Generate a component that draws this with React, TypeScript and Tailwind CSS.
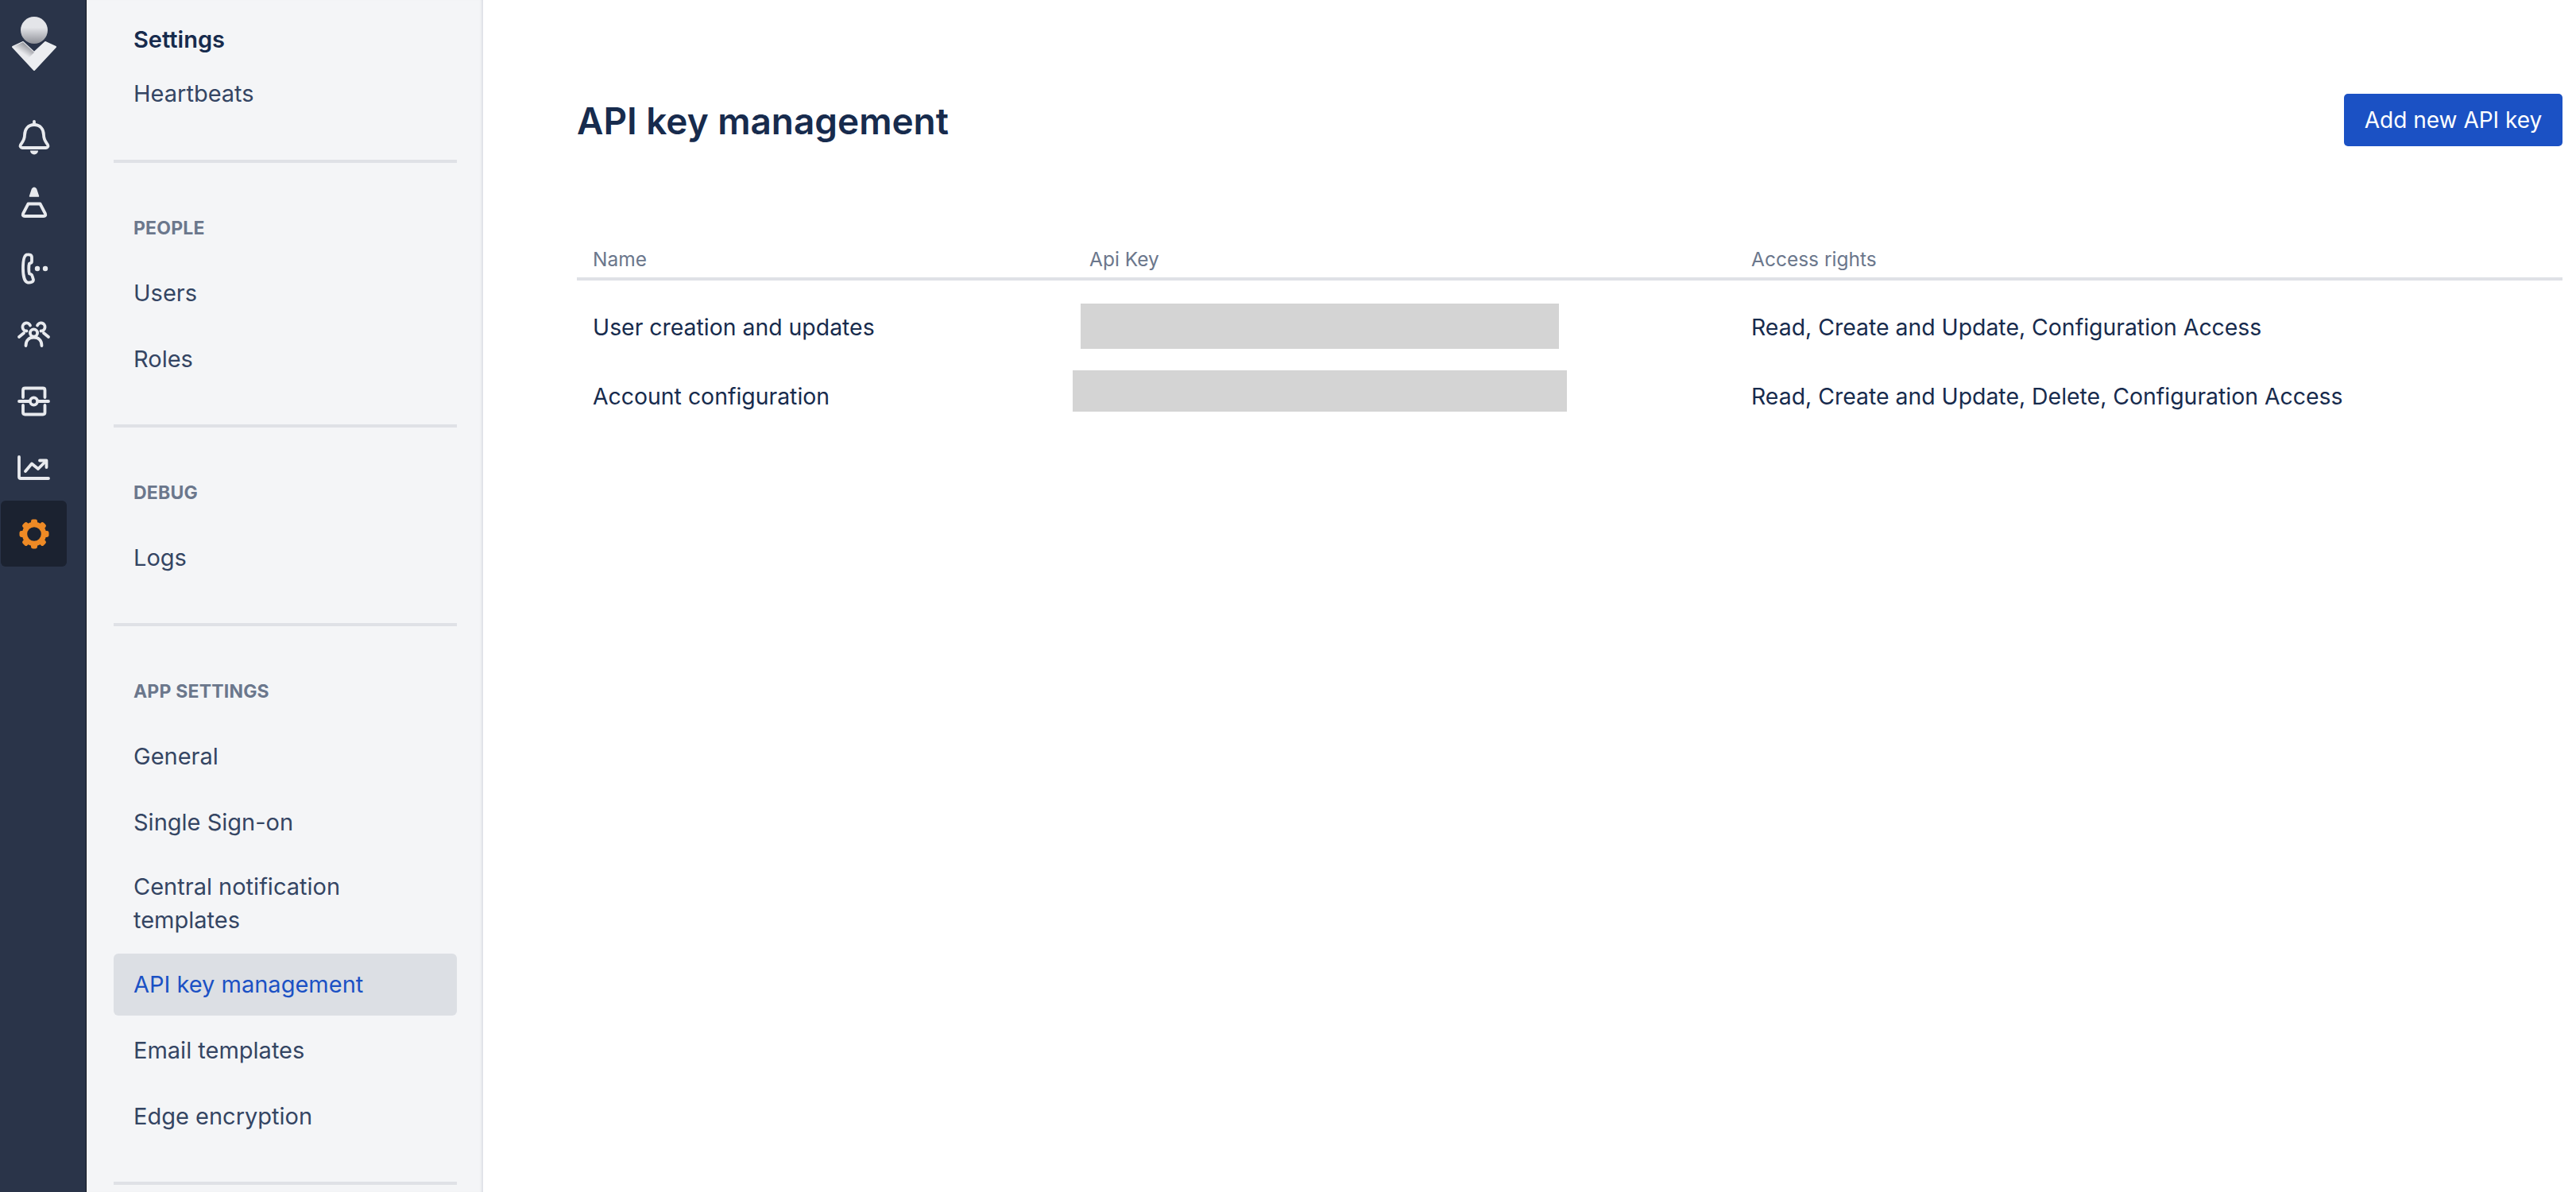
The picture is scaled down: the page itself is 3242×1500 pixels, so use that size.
const navFont = "font-['Inter',sans-serif]";

function Logo() {
  return (
    <svg width="86" height="96" viewBox="0 0 86 96" fill="none">
      <defs>
        <linearGradient id="ball" x1="0" y1="0" x2="0" y2="1">
          <stop offset="0.4" stopColor="#e4e5e9" />
          <stop offset="1" stopColor="#8f9198" />
        </linearGradient>
        <linearGradient id="arm" x1="0.75" y1="0.1" x2="0.3" y2="0.7">
          <stop offset="0" stopColor="#85878e" />
          <stop offset="0.75" stopColor="#e9eaed" />
        </linearGradient>
      </defs>
      <circle cx="43" cy="37" r="17" fill="url(#ball)" />
      <path d="M29 52 L43 65 L57 52 L70 58 L43 87 L16 58 Z" fill="#eceef1" stroke="#eceef1" strokeWidth="2" strokeLinejoin="round" />
      <path d="M29 52 L43 65 L32 76 L16 58 Z" fill="url(#arm)" />
    </svg>
  );
}

const iconProps = {
  width: 48,
  height: 48,
  viewBox: "0 0 48 48",
  fill: "none",
  stroke: "#e8eaee",
  strokeWidth: 3.8,
  strokeLinecap: "round" as const,
  strokeLinejoin: "round" as const,
};

function BellIcon() {
  return (
    <svg {...iconProps}>
      <path d="M24 10 C16 10 12 16 12 23 C12 29 9 32 7 35 C6 37 7 39 9 39 H39 C41 39 42 37 41 35 C39 32 36 29 36 23 C36 16 32 10 24 10Z" />
      <path d="M24 6 V9" />
      <path d="M19 42.5 H29 A5 5 0 0 1 19 42.5Z" fill="#e8eaee" stroke="none" />
    </svg>
  );
}

function ConeIcon() {
  return (
    <svg {...iconProps}>
      <g transform="translate(0 1)">
        <path d="M21.5 7 Q24 3.5 26.5 7 L29.5 16 H18.5 Z" fill="#e8eaee" strokeWidth="1.5" />
        <path d="M16.5 25.5 H31.5 L38 38 Q39 41 36 41 H12 Q9 41 10 38 Z" />
      </g>
    </svg>
  );
}

function PhoneIcon() {
  return (
    <svg {...iconProps}>
      <path d="M15 6.5 C18 6 21 6.5 21 10 L21 15 Q21 17 18 17.5 C17 20 17 28 18 30.5 Q21 31 21.5 33 L23 38 C23 41 19 42 16 41.5 C12 41 10 33 10 24 C10 15 11 7 15 6.5Z" />
      <circle cx="28" cy="24" r="3.2" fill="#e8eaee" stroke="none" />
      <circle cx="38" cy="24" r="3.2" fill="#e8eaee" stroke="none" />
    </svg>
  );
}

function TeamIcon() {
  return (
    <svg {...iconProps}>
      <circle cx="23.5" cy="22" r="4.6" />
      <path d="M13.5 38 C13.5 31 18 27.5 23.5 27.5 S33.5 31 33.5 38" />
      <path d="M14.5 19.5 A5 5 0 1 1 19 12.5" />
      <path d="M32.5 19.5 A5 5 0 1 0 28 12.5" />
      <path d="M5 27 L11 22" />
      <path d="M42 27 L36 22" />
    </svg>
  );
}

function IntegrationIcon() {
  return (
    <svg {...iconProps}>
      <path d="M10 19 V10 Q10 7.5 12.5 7.5 H35 Q37.5 7.5 37.5 10 V19" />
      <path d="M10 29 V38 Q10 40.5 12.5 40.5 H35 Q37.5 40.5 37.5 38 V29" />
      <path d="M5 24 H18" />
      <path d="M29 24 H42" />
      <circle cx="23.5" cy="24" r="4.6" />
    </svg>
  );
}

function ChartIcon() {
  return (
    <svg {...iconProps}>
      <path d="M5 11 V36 Q5 38 7 38 H42" />
      <path d="M13 29 L21 19.5 L29 26 L39 16" />
      <path d="M31 15.5 H39.5 V24" />
    </svg>
  );
}

function GearIcon() {
  const teeth = [0, 45, 90, 135, 180, 225, 270, 315];
  return (
    <svg width="48" height="48" viewBox="0 0 48 48" fill="none">
      <circle cx="24" cy="24" r="12" stroke="#ee8a25" strokeWidth="6.4" />
      {teeth.map((angle) => (
        <rect key={angle} x="20" y="5.5" width="8" height="8" rx="2.4" fill="#ee8a25" transform={`rotate(${angle} 24 24)`} />
      ))}
    </svg>
  );
}

function Rail() {
  const icons = [BellIcon, ConeIcon, PhoneIcon, TeamIcon, IntegrationIcon, ChartIcon];
  return (
    <div className="flex h-full w-[109px] shrink-0 flex-col border-r border-[#11151f] bg-[#2a3449]">
      <div className="h-[129px] pt-[1px]">
        <Logo />
      </div>
      <div className="flex flex-col items-start pl-[1px]">
        {icons.map((Icon, i) => (
          <div key={i} className="flex h-[83.5px] w-[83px] items-center justify-center">
            <Icon />
          </div>
        ))}
        <div className="flex h-[83px] w-[83px] items-center justify-center rounded-md bg-[#1b2230]">
          <GearIcon />
        </div>
      </div>
    </div>
  );
}

function NavItem({ label, active, tall }: { label: string; active?: boolean; tall?: boolean }) {
  return (
    <div
      className={`mb-[5px] flex items-center rounded-md px-[25px] text-[29px] font-[430] leading-[42px] ${tall ? "h-[116px]" : "h-[78px]"} ${
        active ? "bg-[#dcdfe4] text-[#1b51c4]" : "text-[#344563]"
      }`}
    >
      {label}
    </div>
  );
}

function NavGroup({ title, children }: { title: string; children: React.ReactNode }) {
  return (
    <div className="border-t-4 border-[#dfe1e6] pb-[38px]">
      <div className="mb-[23px] mt-[62px] px-[25px] text-[23px] font-bold leading-[40px] tracking-[0.2px] text-[#6b778c]">{title}</div>
      {children}
    </div>
  );
}

function Sidebar() {
  return (
    <aside className="flex h-full w-[499px] shrink-0 flex-col overflow-hidden bg-[#f4f5f7] pl-[34px] pr-[33px] shadow-[inset_-4px_0_3px_-2px_rgba(9,30,66,0.1)]">
      <div className="flex h-[79px] shrink-0 items-end pb-[9px] pl-[25px] text-[29px] font-semibold leading-[40px] text-[#172b4d]">Settings</div>
      <div className="pb-[39px]">
        <NavItem label="Heartbeats" />
      </div>
      <NavGroup title="PEOPLE">
        <NavItem label="Users" />
        <NavItem label="Roles" />
      </NavGroup>
      <NavGroup title="DEBUG">
        <NavItem label="Logs" />
      </NavGroup>
      <NavGroup title="APP SETTINGS">
        <NavItem label="General" />
        <NavItem label="Single Sign-on" />
        <NavItem label="Central notification templates" tall />
        <NavItem label="API key management" active />
        <NavItem label="Email templates" />
        <NavItem label="Edge encryption" />
      </NavGroup>
      <div className="border-t-4 border-[#dfe1e6]" />
    </aside>
  );
}

const rows = [
  { name: "User creation and updates", rights: "Read, Create and Update, Configuration Access", mask: "-ml-[11px] mt-[29px] h-[57px] w-[602px]" },
  { name: "Account configuration", rights: "Read, Create and Update, Delete, Configuration Access", mask: "-ml-[21px] mt-[26px] h-[52px] w-[622px]" },
];

function KeyTable() {
  return (
    <div className="mt-[124px]">
      <div className="grid h-[45px] grid-cols-[625px_833px_1fr] border-b-4 border-[#dfe1e6] pl-[20px] text-[24.5px] leading-[36px] text-[#6b778c]">
        <div>Name</div>
        <div>Api Key</div>
        <div>Access rights</div>
      </div>
      {rows.map((row) => (
        <div key={row.name} className="grid h-[87px] grid-cols-[625px_833px_1fr] items-start pl-[20px] text-[28.4px] font-[430] leading-[40px] text-[#172b4d]">
          <div className="mt-[39px]">{row.name}</div>
          <div className={`bg-[#d4d4d4] ${row.mask}`} />
          <div className="mt-[39px]">{row.rights}</div>
        </div>
      ))}
    </div>
  );
}

export default function App() {
  return (
    <div className={`flex h-[1500px] w-[3242px] overflow-hidden bg-white ${navFont}`}>
      <Rail />
      <Sidebar />
      <main className="flex-1 pl-[118px] pr-[17px] pt-[118px]">
        <div className="flex h-[66px] items-center justify-between">
          <h1 className="pt-[4px] text-[45.9px] font-semibold leading-[60px] text-[#172b4d]">API key management</h1>
          <button className="h-[66px] w-[275px] rounded-[5px] bg-[#1b51c4] text-[28px] font-[430] text-white">Add new API key</button>
        </div>
        <KeyTable />
      </main>
    </div>
  );
}
